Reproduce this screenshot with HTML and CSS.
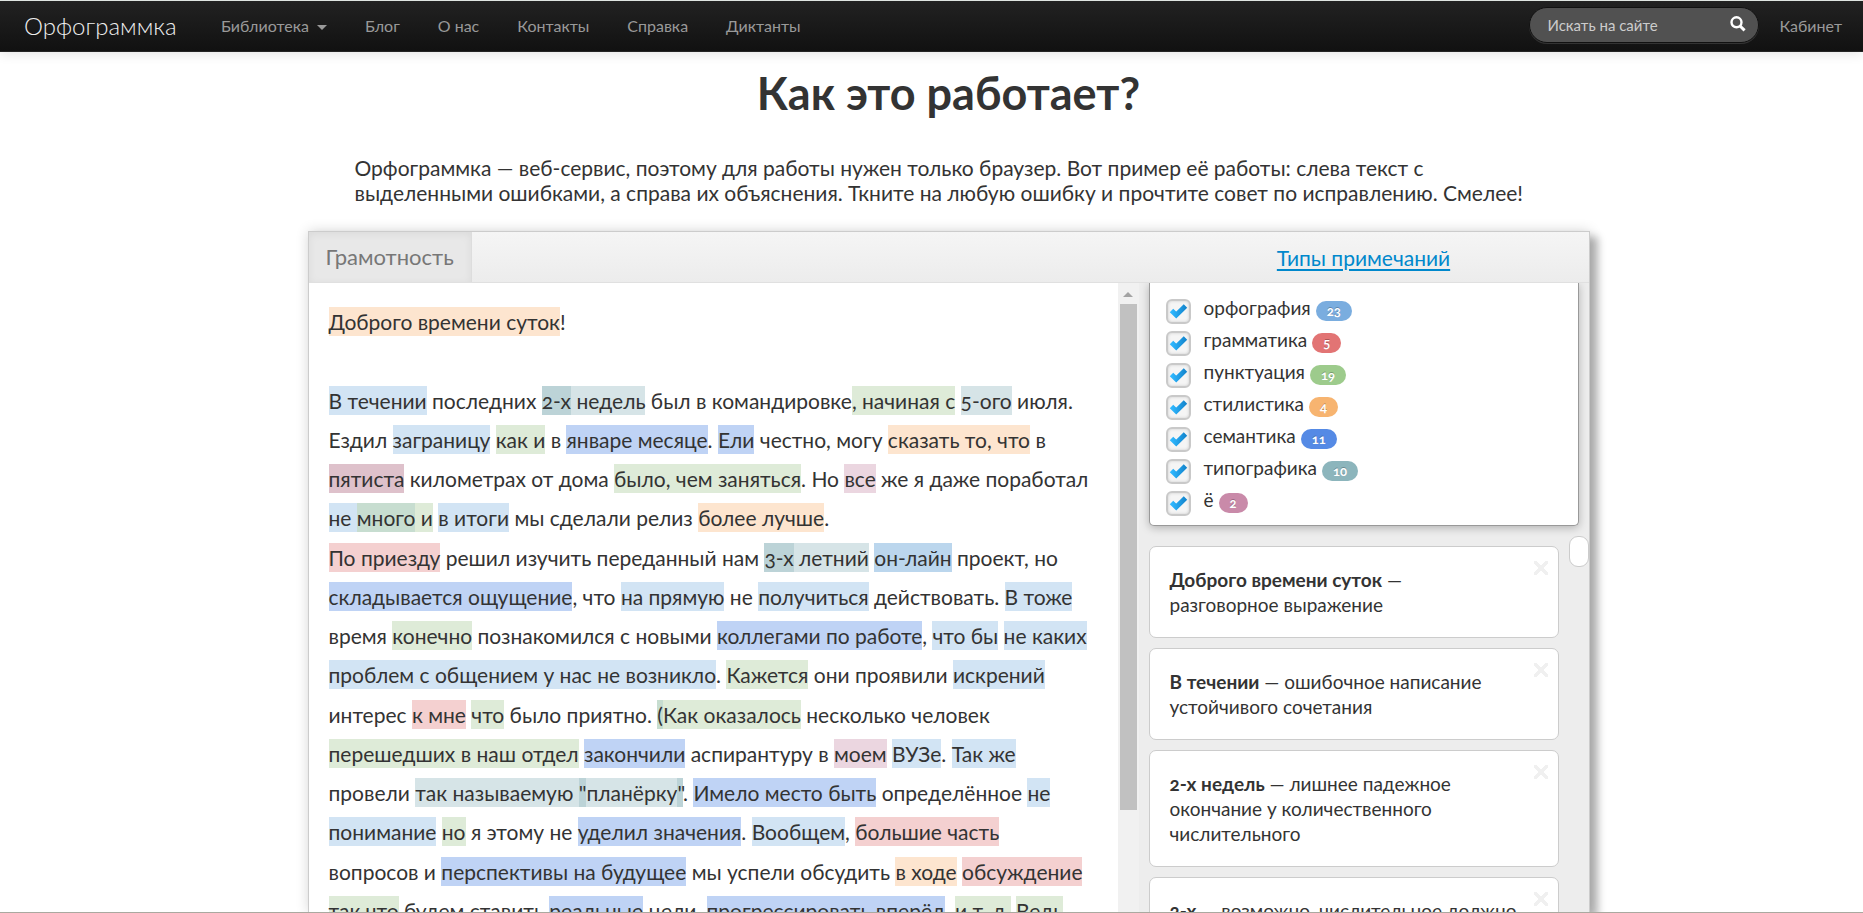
FILE: index.html
```html
<!DOCTYPE html>
<html lang="ru">
<head>
<meta charset="utf-8">
<title>Орфограммка</title>
<link rel="stylesheet" href="styles.css">
</head>
<body>
<nav class="navbar">
  <a class="brand" href="#">Орфограммка</a>
  <ul class="menu">
    <li><a href="#">Библиотека <span class="caret"></span></a></li>
    <li><a href="#">Блог</a></li>
    <li><a href="#">О нас</a></li>
    <li><a href="#">Контакты</a></li>
    <li><a href="#">Справка</a></li>
    <li><a href="#">Диктанты</a></li>
  </ul>
  <form class="search">
    <input type="text" placeholder="Искать на сайте" aria-label="Искать на сайте">
    <button type="button" aria-label="Найти"><svg viewBox="0 0 16 16" width="16" height="16"><circle cx="6.5" cy="6.3" r="5" fill="none" stroke="#fff" stroke-width="2.4"/><path d="M10 10l4.6 4.4" stroke="#fff" stroke-width="3"/></svg></button>
  </form>
  <a class="account" href="#">Кабинет</a>
</nav>
<main class="page">
  <h1>Как это работает?</h1>
  <p class="intro">Орфограммка — веб-сервис, поэтому для работы нужен только браузер. Вот пример её работы: слева текст с<br>выделенными ошибками, а справа их объяснения. Ткните на любую ошибку и прочтите совет по исправлению. Смелее!</p>
  <section class="demo">
    <header class="toolbar">
      <button class="tab" type="button">Грамотность</button>
      <div class="types"><a href="#">Типы примечаний</a></div>
    </header>
    <div class="body">
      <div class="doc">
        <p><mark class="style">Доброго времени суток</mark>!</p>
        <p><br></p>
        <p><mark class="orth">В течении</mark> последних <mark class="typo"><mark class="typo">2-х</mark> недель</mark> был в командировке<mark class="punct">, начиная с</mark> <mark class="typo">5-ого</mark> июля.<br>
        Ездил <mark class="orth">заграницу</mark> <mark class="punct">как и</mark> в <mark class="sem">январе месяце</mark>. <mark class="sem">Ели</mark> честно, могу <mark class="style">сказать то, что</mark> в<br>
        <mark class="multi">пятиста</mark> километрах от дома <mark class="punct">было, чем заняться</mark>. Но <mark class="yo">все</mark> же я даже поработал<br>
        <mark class="orth">не </mark><mark class="mix">много</mark><mark class="punct"> и</mark> <mark class="orth">в итоги</mark> мы сделали релиз <mark class="style">более лучше</mark>.</p>
        <p><mark class="gram">По приезду</mark> решил изучить переданный нам <mark class="typo"><mark class="typo">3-х</mark> летний</mark> <mark class="double">он-лайн</mark> проект, но<br>
        <mark class="sem">складывается ощущение</mark>, что <mark class="orth">на прямую</mark> не <mark class="orth">получиться</mark> действовать. <mark class="orth">В тоже</mark><br>
        время <mark class="punct">конечно</mark> познакомился с новыми <mark class="sem">коллегами по работе</mark>, <mark class="orth">что бы</mark> <mark class="orth">не каких</mark><br>
        <mark class="orth">проблем с общением у нас не возникло</mark>. <mark class="punct">Кажется</mark> они проявили <mark class="orth">искрений</mark><br>
        интерес <mark class="gram">к мне</mark> <mark class="punct">что</mark> было приятно. <mark class="mix">(</mark><mark class="punct">Как оказалось</mark> несколько человек<br>
        <mark class="punct">перешедших в наш отдел</mark> <mark class="sem">закончили</mark> аспирантуру в <mark class="yo">моем</mark> <mark class="orth">ВУЗе</mark>. <mark class="orth">Так же</mark><br>
        провели <mark class="typo">так называемую <mark class="typo">"</mark>планёрку<mark class="typo">"</mark></mark>. <mark class="sem">Имело место быть</mark> определённое <mark class="orth">не</mark><br>
        <mark class="orth">понимание</mark> <mark class="punct">но</mark> я этому не <mark class="sem">уделил значения</mark>. <mark class="orth">Вообщем</mark>, <mark class="gram">большие часть</mark><br>
        вопросов и <mark class="sem">перспективы на будущее</mark> мы успели обсудить <mark class="style">в ходе</mark> <mark class="gram">обсуждение</mark><br>
        <mark class="punct">так что</mark> будем ставить <mark class="sem">реальные</mark> цели, <mark class="sem">прогрессировать вперёд</mark>, <mark class="punct">и т. д.</mark> <mark class="punct">Ведь</mark></p>
      </div>
      <div class="scroll"><span class="arrow"></span><span class="thumb"></span></div>
      <aside class="side">
        <div class="filters">
          <label><input type="checkbox" checked><span>орфография</span><b class="c-orth">23</b></label>
          <label><input type="checkbox" checked><span>грамматика</span><b class="c-gram">5</b></label>
          <label><input type="checkbox" checked><span>пунктуация</span><b class="c-punct">19</b></label>
          <label><input type="checkbox" checked><span>стилистика</span><b class="c-style">4</b></label>
          <label><input type="checkbox" checked><span>семантика</span><b class="c-sem">11</b></label>
          <label><input type="checkbox" checked><span>типографика</span><b class="c-typo">10</b></label>
          <label><input type="checkbox" checked><span>ё</span><b class="c-yo">2</b></label>
        </div>
        <div class="notes">
          <div class="cards">
            <article><button type="button" aria-label="Закрыть"></button><strong>Доброго времени суток</strong> —<br>разговорное выражение</article>
            <article><button type="button" aria-label="Закрыть"></button><strong>В течении</strong> — ошибочное написание<br>устойчивого сочетания</article>
            <article><button type="button" aria-label="Закрыть"></button><strong>2-х недель</strong> — лишнее падежное<br>окончание у количественного<br>числительного</article>
            <article><button type="button" aria-label="Закрыть"></button><strong>2-х</strong> — возможно, числительное должно</article>
          </div>
          <span class="knob"></span>
        </div>
      </aside>
    </div>
  </section>
</main>
</body>
</html>
```
FILE: styles.css
```css
* { box-sizing: border-box; }
body {
  margin: 0;
  height: 100vh;
  overflow: hidden;
  display: flex;
  flex-direction: column;
  border-top: 1px solid #dfe5e1;
  border-bottom: 1px solid #aaa9a0;
  background: #fff;
  color: #333;
  font-family: Lato, "Open Sans", sans-serif;
  font-size: 19px;
  line-height: 25px;
  font-variant-numeric: oldstyle-nums;
}
a { text-decoration: none; }
button, input { font: inherit; }

.navbar {
  flex: none;
  display: flex;
  align-items: center;
  height: 51px;
  padding: 0 21px 2px 24px;
  background: linear-gradient(#222, #111);
  border-bottom: 1px solid #252525;
  box-shadow: 0 1px 12px rgba(0, 0, 0, .12);
  white-space: nowrap;
}
.brand { color: #eee; font-size: 24px; font-weight: 300; width: 179px; }
.menu { display: flex; gap: 38px; margin: 0; padding: 0 0 0 18px; list-style: none; flex: 1; }
.menu a, .account { color: #999; font-size: 16px; }
.caret {
  display: inline-block;
  margin-left: 4px;
  border: 5px solid transparent;
  border-top-color: #999;
  border-bottom: 0;
  vertical-align: middle;
}
.search {
  display: flex;
  align-items: center;
  width: 230px;
  height: 36px;
  margin-right: 20px;
  padding: 0 12px 0 17px;
  background: #515151;
  border: 1px solid #111;
  border-radius: 18px;
  box-shadow: 0 1px 0 #333;
}
.search input {
  flex: 1;
  min-width: 0;
  padding: 0;
  border: 0;
  outline: 0;
  background: none;
  color: #fff;
  font-size: 15px;
}
.search input::placeholder { color: #ccc; opacity: 1; }
.search button { display: flex; padding: 0 0 3px; border: 0; background: none; }

.page {
  flex: 1;
  min-height: 0;
  display: flex;
  flex-direction: column;
  width: 100%;
  max-width: 1316px;
  margin: 0 auto;
  padding-left: 34px;
}
h1 { margin: 11px 0 0; font-size: 45px; line-height: 60px; text-align: center; }
.intro { margin: 32px 0 0 47px; font-size: 21px; white-space: nowrap; }
.demo {
  flex: 1;
  min-height: 0;
  display: flex;
  flex-direction: column;
  margin-top: 26px;
  border: 1px solid #ccc;
  border-bottom: 0;
  box-shadow: 8px 6px 8px rgba(0, 0, 0, .28), 0 0 12px rgba(0, 0, 0, .16);
}
.toolbar {
  flex: none;
  display: flex;
  height: 51px;
  background: linear-gradient(#f5f5f5, #ececec);
  border-bottom: 1px solid #e0e0e0;
}
.tab {
  padding: 0 17px 2px;
  border: 0;
  border-right: 1px solid #ddd;
  background: #e8e8e8;
  box-shadow: inset 0 2px 8px rgba(0, 0, 0, .06);
  color: #777;
  font-size: 22px;
}
.types { width: 450px; margin-left: auto; padding-top: 13px; text-align: center; }
.types a { color: #08c; font-size: 21px; text-decoration: underline; text-decoration-thickness: 2px; text-underline-offset: 3px; }
.body { flex: 1; min-height: 0; display: flex; overflow: hidden; background: #fff; }
.doc { flex: 1; min-width: 0; padding: 19px 0 0 20px; font-size: 21px; line-height: 1.87; white-space: nowrap; }
.doc p { margin: 0; }
mark { padding: 2px 0; color: inherit; }
.orth { background: #d2e4f4; }
.double { background: #bbd6ed; }
.gram { background: #f4d0d0; }
.punct { background: #deebd8; }
.style { background: #fde5cf; }
.sem { background: #bfd3f5; }
.typo { background: rgba(140, 181, 188, .36); }
.yo { background: #ebd6e0; }
.multi { background: #dec1cb; }
.mix { background: #c7ddd0; }

.scroll { flex: none; width: 21px; padding: 9px 2px 0; background: #f1f1f1; }
.arrow { display: block; width: 10px; margin: 0 auto 7px; border: 5px solid transparent; border-top: 0; border-bottom-color: #a3a3a3; }
.thumb { display: block; height: 506px; background: #c1c1c1; }

.side { flex: none; width: 450px; background: #ededed; }
.filters {
  width: 430px;
  height: 243px;
  margin-left: 10px;
  padding: 16px 16px 0;
  background: #fff;
  border: 1px solid #999;
  border-top: 0;
  border-radius: 0 0 5px 5px;
  box-shadow: 0 2px 8px rgba(0, 0, 0, .25);
  display: grid;
  grid-auto-rows: 32px;
}
.filters label { display: flex; align-items: flex-start; }
.filters span { margin: -4px 5px 0 13px; }
.filters input {
  appearance: none;
  width: 25px;
  height: 25px;
  margin: 0;
  border: 2px solid #c9c9c9;
  border-radius: 6px;
  background: #f5f5f5 url("data:image/svg+xml,%3Csvg xmlns='http://www.w3.org/2000/svg' viewBox='0 0 21 21'%3E%3Cdefs%3E%3ClinearGradient id='g'%3E%3Cstop stop-color='%232fb8ff'/%3E%3Cstop offset='1' stop-color='%231487cf'/%3E%3C/linearGradient%3E%3C/defs%3E%3Cpath d='M3.500 9.500l4.700 4.500L17.500 5' fill='none' stroke='url(%23g)' stroke-width='5'/%3E%3C/svg%3E");
  box-shadow: inset 0 0 3px #ccc;
}
.filters b {
  min-width: 29px;
  height: 20px;
  margin-top: 2px;
  padding: 0 11px;
  border-radius: 10px;
  color: #fff;
  font-size: 13px;
  line-height: 20px;
  text-align: center;
  text-shadow: 0 -1px 0 rgba(0, 0, 0, .25);
}
.c-orth { background: #7aaddf; }
.c-gram { background: #e27474; }
.c-punct { background: #9dcb8c; }
.c-style { background: #f7b470; }
.c-sem { background: #558ae5; }
.c-typo { background: #8cb5bc; }
.c-yo { background: #c98aa9; }

.notes { display: flex; justify-content: space-between; padding: 10px 0 0 10px; }
.cards { display: grid; gap: 10px; width: 410px; margin-top: 10px; }
.cards article { padding: 20px; background: #fff; border: 1px solid #ccc; border-radius: 7px; white-space: nowrap; }
.cards button {
  float: right;
  width: 14px;
  height: 14px;
  margin: -6px -10px 0 0;
  padding: 0;
  border: 0;
  background: linear-gradient(45deg, transparent 40%, #f0f0f0 40% 60%, transparent 60%), linear-gradient(-45deg, transparent 40%, #f0f0f0 40% 60%, transparent 60%);
}
.knob { width: 20px; height: 31px; background: #fff; border: 1px solid #ccc; border-radius: 9px; }
```
